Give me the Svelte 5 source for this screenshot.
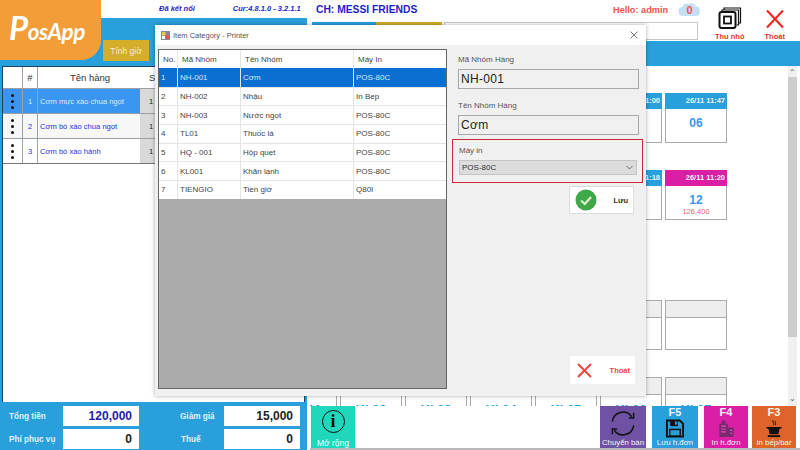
<script>
  const orderRows = [
    { no: 1, name: 'Cơm mực xào chua ngọt', active: true },
    { no: 2, name: 'Cơm bò xào chua ngọt' },
    { no: 3, name: 'Cơm bò xào hành' }
  ];

  const categories = [
    ['NH-001', 'Cơm', 'POS-80C'],
    ['NH-002', 'Nhậu', 'In Bep'],
    ['NH-003', 'Nước ngọt', 'POS-80C'],
    ['TL01', 'Thuốc lá', 'POS-80C'],
    ['HQ - 001', 'Hộp quẹt', 'POS-80C'],
    ['KL001', 'Khăn lạnh', 'POS-80C'],
    ['TIENGIO', 'Tiền giờ', 'Q80I']
  ];

  const emptyCards = (n) => Array.from({ length: n }, () => ({}));

  const row1 = [...emptyCards(6), { time: '26/11 11:00', label: '', amount: '120,000' }, { time: '26/11 11:47', label: '06' }];
  const row2 = [...emptyCards(6), { time: '26/11 11:18', label: '', amount: '' }, { time: '26/11 11:20', label: '12', amount: '126,400', pink: true }];
  const row3 = emptyCards(8).map((c) => ({ ...c, idle: true }));
  const row4 = ['Kl 00', 'Kl 01', 'Kl 02', 'Kl 03', 'Kl 04', 'Kl 05', 'Kl 06', 'Kl 07'].map((top) => ({ idle: true, top }));
</script>

<div class="page">
  <section class="left">
    <div class="status">
      <span>Đã kết nối</span>
      <span class="version">Cur:4.8.1.0 - 3.2.1.1</span>
    </div>
    <div class="left-panel">
      <div class="left-tools"><button class="timer">Tính giờ</button></div>
      <div class="order">
        <div class="order-head">
          <span class="c-handle"></span>
          <span class="c-no">#</span>
          <span class="c-name">Tên hàng</span>
          <span class="c-qty">SL</span>
        </div>
        {#each orderRows as row}
          <div class="order-row" class:active={row.active}>
            <span class="c-handle"><i></i><i></i><i></i></span>
            <span class="c-no">{row.no}</span>
            <span class="c-name">{row.name}</span>
            <span class="c-qty">1</span>
          </div>
        {/each}
      </div>
      <div class="totals">
        <span class="t-label">Tổng tiền</span>
        <span class="t-box strong">120,000</span>
        <span class="t-label t-right">Giảm giá</span>
        <span class="t-box">15,000</span>
        <span class="t-label">Phí phục vụ</span>
        <span class="t-box">0</span>
        <span class="t-label t-right t-tax">Thuế</span>
        <span class="t-box">0</span>
      </div>
    </div>
  </section>

  <section class="right">
    <div class="top">
      <div class="top-main">
        <div class="top-text">
          <span class="store">CH: MESSI FRIENDS</span>
          <span class="hello">Hello: admin</span>
          <svg class="cloud" width="23" height="15" viewBox="0 0 23 15">
            <path d="M5 14C1.500 14 0 11.500 1 9.500C-.5 7 2 4.500 4.500 5C5 2 8.500 .5 11 2C13.500 .5 17 1.500 17.500 4.500C20.500 4 23 7 21.500 9.500C22.500 12 20.500 14 18 14Z" fill="#c5e0f5" />
            <text x="11.500" y="11.500" text-anchor="middle">0</text>
          </svg>
        </div>
        <div class="tabs">
          <span class="tab"></span>
          <span class="tab yellow"></span>
          <span class="search"></span>
        </div>
      </div>
      <div class="action">
        <svg width="24" height="22" viewBox="0 0 24 22">
          <path d="M6 3V1H22.500V16H20.500M4 5V3H20.500V18H18.500" fill="none" stroke="#111" stroke-width="1.200" />
          <rect x="1.500" y="5" width="16" height="16" rx="2" fill="#fff" stroke="#111" stroke-width="2" />
          <rect x="6" y="9.500" width="7" height="7" fill="none" stroke="#111" stroke-width="1.800" />
        </svg>
        <span>Thu nhỏ</span>
      </div>
      <div class="action exit">
        <svg width="20" height="20" viewBox="0 0 20 20">
          <path d="M2 1.500L18 18.500M18 1.500L2 18.500" stroke="#ee2a24" stroke-width="2.200" />
        </svg>
        <span>Thoát</span>
      </div>
    </div>
    <div class="band"></div>

    <div class="floor">
      <div class="cards">
        <div class="card-row">
          {#each row1 as card}
            <div class="card">
              <div class="card-head">{card.time ?? ''}</div>
              <div class="card-body"><b>{card.label ?? ''}</b><small>{card.amount ?? ''}</small></div>
            </div>
          {/each}
        </div>
        <div class="card-row">
          {#each row2 as card}
            <div class="card">
              <div class="card-head" class:pink={card.pink}>{card.time ?? ''}</div>
              <div class="card-body"><b>{card.label ?? ''}</b><small>{card.amount ?? ''}</small></div>
            </div>
          {/each}
        </div>
        <div class="card-row third">
          {#each row3 as card}
            <div class="card">
              <div class="card-head idle"></div>
              <div class="card-body"></div>
            </div>
          {/each}
        </div>
        <div class="card-row">
          {#each row4 as card}
            <div class="card">
              <div class="card-head idle"></div>
              <div class="card-body"><em>{card.top}</em></div>
            </div>
          {/each}
        </div>
      </div>
      <div class="scroll">
        <span class="arrow">⌃</span>
        <div class="thumb"></div>
        <span class="arrow down">⌄</span>
      </div>
    </div>

    <div class="bottom">
      <div class="more">
        <span class="info">i</span>
        <span>Mở rộng</span>
      </div>
      <div class="spacer"></div>
      <div class="fn purple">
        <svg class="swap" width="30" height="30" viewBox="0 0 30 30">
          <path d="M4 13A11 11 0 0 1 24 8M26 17A11 11 0 0 1 6 22" fill="none" stroke="#111" stroke-width="1.500" />
          <path d="M21 9L26 9.500L26 4M9 21L4 20.500L4 26" fill="none" stroke="#111" stroke-width="1.500" />
        </svg>
        <span class="fn-label">Chuyển bàn</span>
      </div>
      <div class="fn blue">
        <span class="key">F5</span>
        <svg width="20" height="20" viewBox="0 0 20 20">
          <path d="M1.500 1.500H15L18.500 5V18.500H1.500Z" fill="none" stroke="#111" stroke-width="2" />
          <rect x="5" y="1.500" width="8" height="6" fill="#111" />
          <rect x="10" y="2.500" width="2" height="3.500" fill="#29a0dc" />
          <rect x="4.500" y="11" width="11" height="7" fill="none" stroke="#111" stroke-width="1.500" />
        </svg>
        <span class="fn-label">Lưu h.đơn</span>
      </div>
      <div class="fn magenta">
        <span class="key">F4</span>
        <svg width="20" height="20" viewBox="0 0 20 20">
          <path d="M3 5H12V19H3ZM12 9H18V19H12ZM5.500 1.500H9.500V5H5.500Z" fill="#7a2a6c" />
          <path d="M5 7.500H10M5 10.500H10M5 13.500H10M14 12H16.500M14 15H16.500" stroke="#e14fb5" stroke-width="1.200" />
        </svg>
        <span class="fn-label">In h.đơn</span>
      </div>
      <div class="fn orange">
        <span class="key">F3</span>
        <svg width="20" height="20" viewBox="0 0 20 20">
          <path d="M9 1C7.500 3 11 4 9.500 6.500M11.500 2C10.500 3.500 12.500 4.500 11.500 6.500" fill="none" stroke="#2b1206" stroke-width="1" />
          <path d="M2 8.500H18V10H16L14.500 16H5.500L4 10H2Z" fill="#111" />
          <rect x="3.500" y="17" width="13" height="2" fill="#111" />
        </svg>
        <span class="fn-label">In bếp/bar</span>
      </div>
    </div>
  </section>

  <div class="logo"><span class="logo-p">P</span>osApp</div>

  <div class="dialog">
    <div class="title">
      <svg width="9" height="9" viewBox="0 0 9 9">
        <rect width="9" height="9" fill="#7d8a9c" />
        <rect x="1" y="1" width="3.500" height="3.500" fill="#f3c544" />
        <rect x="4.500" y="4" width="4" height="4" fill="#e2574c" />
        <rect x="1" y="5" width="3" height="3" fill="#fff" />
      </svg>
      <span>Item Category - Printer</span>
      <svg class="close" width="8" height="8" viewBox="0 0 8 8">
        <path d="M.5.500L7.500 7.500M7.500.500L.5 7.500" stroke="#555" stroke-width=".8" />
      </svg>
    </div>
    <div class="dialog-body">
      <div class="grid">
        <div class="grid-head">
          <span class="g-no">No.</span>
          <span class="g-code">Mã Nhóm</span>
          <span class="g-name">Tên Nhóm</span>
          <span class="g-printer">Máy In</span>
        </div>
        {#each categories as cat, i}
          <div class="grid-row" class:selected={i === 0}>
            <span class="g-no">{i + 1}</span>
            <span class="g-code">{cat[0]}</span>
            <span class="g-name">{cat[1]}</span>
            <span class="g-printer">{cat[2]}</span>
          </div>
        {/each}
      </div>

      <div class="form">
        <div class="field">
          <span class="field-label">Mã Nhóm Hàng</span>
          <div class="field-input">NH-001</div>
        </div>
        <div class="field">
          <span class="field-label">Tên Nhóm Hàng</span>
          <div class="field-input">Cơm</div>
        </div>
        <div class="printer-box">
          <span class="field-label">Máy in</span>
          <div class="select">
            <span>POS-80C</span>
            <svg width="7" height="5" viewBox="0 0 7 5"><path d="M.5 1L3.500 4L6.500 1" fill="none" stroke="#666" /></svg>
          </div>
        </div>
        <div class="dialog-btn save">
          <svg width="22" height="22" viewBox="0 0 22 22">
            <circle cx="11" cy="11" r="10.500" fill="#3fa84b" />
            <path d="M6 11.500L9.800 15L16 8" fill="none" stroke="#dfeecb" stroke-width="2.200" />
          </svg>
          <span>Lưu</span>
        </div>
        <div class="dialog-btn quit">
          <svg width="15" height="15" viewBox="0 0 15 15">
            <path d="M1 1L14 14M14 1L1 14" stroke="#ee4540" stroke-width="2" />
          </svg>
          <span>Thoát</span>
        </div>
      </div>
    </div>
  </div>
</div>

<style>
  :global(body) {
    margin: 0;
    background: #fff;
  }

  .page {
    position: relative;
    display: flex;
    width: 800px;
    height: 450px;
    overflow: hidden;
    background: #fff;
    font-family: "Liberation Sans", Arial, sans-serif;
    font-size: 8px;
    color: #333;
  }

  /* left: order panel */
  .left {
    display: flex;
    flex-direction: column;
    width: 307px;
    margin-right: 3px;
    flex: none;
  }

  .status {
    display: flex;
    gap: 38px;
    height: 18px;
    padding: 4px 0 0 159px;
    box-sizing: border-box;
    color: #1e1ec8;
    font-size: 7.500px;
    font-weight: bold;
    font-style: italic;
  }

  .left-panel {
    display: flex;
    flex-direction: column;
    flex: 1;
    background: #29a0dc;
  }

  .left-tools {
    display: flex;
    height: 48px;
    padding: 22px 0 0 103px;
    box-sizing: border-box;
  }

  .timer {
    width: 46px;
    height: 21px;
    padding: 0;
    border: 0;
    background: #d4ad2a;
    color: #f4eecf;
    font: 8.500px "Liberation Sans", Arial, sans-serif;
  }

  .order {
    flex: 1;
    margin: 0 2px 0 2px;
    border: 1px solid #17466a;
    border-bottom: 0;
    background: #fff;
  }

  .order-head, .order-row {
    display: flex;
    align-items: center;
  }

  .order-head {
    height: 21px;
    font-size: 9.500px;
    color: #333;
  }

  .order-row {
    height: 24px;
    border-top: 1px solid #9aa0a6;
    color: #2f2fd8;
    font-size: 7.600px;
    background: #f7f7f7;
  }

  .order-row:nth-child(4) {
    background: #fff;
  }

  .order-row:last-child {
    border-bottom: 1px solid #777;
  }

  .order-row.active {
    background: #3a96f0;
    color: #dcecfb;
  }

  .c-handle {
    display: flex;
    flex-direction: column;
    align-items: center;
    justify-content: center;
    gap: 3px;
    width: 19px;
    height: 100%;
  }

  .c-handle i {
    width: 3px;
    height: 3px;
    border-radius: 50%;
    background: #111;
  }

  .c-no {
    display: flex;
    align-items: center;
    justify-content: center;
    width: 15px;
    height: 100%;
    border-left: 1px solid #9aa0a6;
    box-sizing: border-box;
  }

  .c-name {
    display: flex;
    align-items: center;
    width: 103px;
    height: 100%;
    padding-left: 2px;
    border-left: 1px solid #9aa0a6;
    box-sizing: border-box;
    white-space: nowrap;
  }

  .order-head .c-name {
    justify-content: center;
  }

  .c-qty {
    display: flex;
    align-items: center;
    width: 40px;
    height: 100%;
    padding-left: 9px;
    box-sizing: border-box;
  }

  .order-row .c-qty {
    background: #d9d9d9;
    color: #222;
  }

  .totals {
    display: grid;
    grid-template-columns: 63px 76px 85px 76px;
    grid-template-rows: 20px 20px;
    row-gap: 3px;
    height: 48px;
    padding: 4px 0 0 0;
    box-sizing: border-box;
    align-items: center;
  }

  .t-label {
    padding-left: 9px;
    color: #e3f2fb;
    font-size: 8.200px;
    font-weight: bold;
  }

  .t-right {
    padding-left: 41px;
  }

  .t-tax {
    padding-left: 42px;
  }

  .t-box {
    height: 100%;
    padding-right: 7px;
    background: #fff;
    color: #222;
    font-size: 12px;
    font-weight: bold;
    line-height: 20px;
    text-align: right;
  }

  .strong {
    color: #1e1ea8;
  }

  /* right: floor plan */
  .right {
    display: flex;
    flex-direction: column;
    flex: 1;
    min-width: 0;
  }

  .top {
    display: flex;
    height: 41px;
  }

  .top-main {
    width: 400px;
    flex: none;
  }

  .top-text {
    display: flex;
    align-items: center;
    height: 22px;
    padding-bottom: 3px;
    box-sizing: border-box;
  }

  .store {
    width: 303px;
    padding-left: 6px;
    box-sizing: border-box;
    color: #1e1ec8;
    font-size: 10.300px;
    font-weight: bold;
  }

  .hello {
    width: 65px;
    color: #f0524c;
    font-size: 9.200px;
    font-weight: bold;
  }

  .cloud {
    flex: none;
  }

  .cloud text {
    fill: #ef5350;
    font-size: 11px;
    font-weight: bold;
  }

  .tabs {
    display: flex;
    height: 19px;
    padding-left: 2px;
  }

  .tab {
    width: 64px;
    background: #29a0dc;
  }

  .tab.yellow {
    width: 66px;
    background: #d4ad2a;
  }

  .search {
    width: 254px;
    height: 18px;
    margin-left: 2px;
    border: 1px solid #c8c8c8;
    box-sizing: border-box;
  }

  .action {
    display: flex;
    flex-direction: column;
    align-items: center;
    gap: 3px;
    width: 42px;
    padding-top: 7px;
    box-sizing: border-box;
    color: #e0352f;
    font-size: 7.500px;
    font-weight: bold;
    white-space: nowrap;
  }

  .action.exit {
    width: 54px;
    padding: 9px 0 0 0;
    gap: 3px;
  }

  .band {
    height: 25px;
    background: #29a0dc;
  }

  .floor {
    display: flex;
    flex: 1;
    min-height: 0;
  }

  .cards {
    display: flex;
    flex-direction: column;
    flex: 1;
    align-items: flex-end;
    gap: 27px;
    padding: 27px 61px 0 0;
    min-width: 0;
    overflow: hidden;
  }

  .card-row {
    display: flex;
    gap: 3px;
    flex: none;
  }

  .third {
    margin-top: 53px;
  }

  .card {
    display: flex;
    flex-direction: column;
    width: 62px;
    height: 50px;
    border: 1px solid #aaa;
    box-sizing: border-box;
    flex: none;
  }

  .card-head {
    height: 16px;
    margin: -1px -1px 0;
    background: #29a0dc;
    color: #e8f5fc;
    font-size: 7.500px;
    font-weight: bold;
    line-height: 16px;
    text-align: right;
    padding-right: 2px;
  }

  .card-head.pink {
    background: #d91fa6;
  }

  .card-head.idle {
    margin: 0;
    background: #eee;
    border-bottom: 1px solid #aaa;
  }

  .card-body {
    display: flex;
    flex-direction: column;
    align-items: center;
    flex: 1;
    padding: 7px 0 0 0;
    box-sizing: border-box;
  }

  .card-body b {
    color: #3a96f0;
    font-size: 12px;
    line-height: 14px;
  }

  .card-body small {
    color: #f0606a;
    font-size: 7.500px;
    line-height: 9px;
  }

  .card-body em {
    color: #29a0dc;
    font-size: 13px;
    font-style: normal;
    font-weight: bold;
  }

  .scroll {
    display: flex;
    flex-direction: column;
    width: 9px;
    margin-right: 3px;
    flex: none;
    background: #f0f0f0;
    color: #555;
    font-size: 8px;
    line-height: 8px;
    text-align: center;
  }

  .arrow {
    height: 11px;
    padding-top: 3px;
    box-sizing: border-box;
  }

  .arrow.down {
    margin-top: auto;
    padding-top: 0;
  }

  .thumb {
    height: 260px;
    background: #cdcdcd;
  }

  .bottom {
    display: flex;
    height: 44px;
    border-bottom: 2px solid #b8b8b8;
    box-sizing: border-box;
    padding-left: 1px;
    background: #fff;
  }

  .more {
    display: flex;
    flex-direction: column;
    align-items: center;
    justify-content: space-between;
    width: 44px;
    padding-top: 4px;
    box-sizing: border-box;
    background: #1fd8bc;
    color: #f2fffb;
    font-size: 8.500px;
  }

  .info {
    width: 23px;
    height: 23px;
    border: 1.500px solid #111;
    border-radius: 50%;
    box-sizing: border-box;
    color: #111;
    font-family: "Liberation Serif", serif;
    font-size: 18px;
    font-weight: bold;
    line-height: 20px;
    text-align: center;
  }

  .spacer {
    width: 245px;
  }

  .fn {
    display: flex;
    flex-direction: column;
    align-items: center;
    width: 46px;
    margin-right: 6px;
    color: #f4f4f4;
  }

  .key {
    height: 13px;
    font-size: 11px;
    line-height: 13px;
    font-weight: bold;
  }

  .fn-label {
    margin-top: auto;
    font-size: 7.800px;
    line-height: 10px;
    white-space: nowrap;
  }

  .swap {
    margin-top: 3px;
  }

  .purple {
    background: #6f52a3;
  }

  .blue {
    background: #29a0dc;
  }

  .magenta {
    width: 44px;
    margin-right: 4px;
    background: #d91fa6;
  }

  .orange {
    width: 44px;
    margin-right: 0;
    background: #e0642a;
  }

  /* logo sits over the corner of the window */
  .logo {
    position: absolute;
    left: 0;
    top: 0;
    width: 101px;
    height: 60px;
    padding: 7px 0 0 9px;
    box-sizing: border-box;
    border-radius: 0 0 20px 0;
    background: #f29d38;
    color: #fff;
    font-family: Lato, sans-serif;
    font-size: 22.500px;
    font-style: italic;
    font-weight: bold;
    letter-spacing: -.5px;
    white-space: nowrap;
  }

  .logo-p {
    font-size: 33px;
  }

  /* dialog window */
  .dialog {
    position: absolute;
    left: 155px;
    top: 25px;
    display: flex;
    flex-direction: column;
    width: 491px;
    height: 371px;
    background: #f0f0f0;
    box-shadow: 0 0 4px rgba(0, 0, 0, .35);
    font-family: "Liberation Sans", Arial, sans-serif;
  }

  .title {
    display: flex;
    align-items: center;
    gap: 3px;
    height: 20px;
    padding: 0 8px 0 6px;
    background: #fff;
    color: #555;
    font-size: 7.500px;
    flex: none;
  }

  .close {
    margin-left: auto;
  }

  .dialog-body {
    display: flex;
    flex: 1;
    min-height: 0;
    padding: 4px 0 7px 3px;
  }

  .grid {
    width: 289px;
    flex: none;
    border: 1px solid #666;
    box-sizing: border-box;
    background: #ababab;
  }

  .grid-head, .grid-row {
    display: flex;
    align-items: center;
    background: #fff;
    font-size: 8px;
    color: #444;
  }

  .grid-head {
    height: 18px;
  }

  .grid-row {
    height: 18.700px;
    border-top: 1px solid #e4e4e4;
    box-sizing: border-box;
  }

  .grid-row.selected {
    background: #0a6fd0;
    color: #d6e8fa;
    border-top: 0;
  }

  .grid-head span, .grid-row span {
    display: flex;
    align-items: center;
    height: 100%;
    padding-left: 2px;
    border-left: 1px solid #e4e4e4;
    box-sizing: border-box;
  }

  .grid-head span {
    padding-left: 4px;
  }

  .g-no {
    width: 18px;
    border-left: 0 !important;
  }

  .g-code {
    width: 63px;
  }

  .g-name {
    width: 113px;
  }

  .g-printer {
    width: 93px;
  }

  .form {
    display: flex;
    flex-direction: column;
    flex: 1;
    padding: 5px 3px 0 5px;
  }

  .field {
    padding: 0 4px 0 6px;
    margin-bottom: 11px;
  }

  .field-label {
    display: block;
    height: 12px;
    margin-bottom: 3px;
    color: #555;
    font-size: 8px;
    line-height: 12px;
  }

  .field-input {
    height: 20px;
    padding-left: 2px;
    border: 1px solid #a8a8a8;
    box-sizing: border-box;
    color: #222;
    font-size: 12px;
    line-height: 18px;
    letter-spacing: .3px;
  }

  .printer-box {
    height: 44px;
    padding: 5px 5px 0 6px;
    margin-top: -7px;
    border: 1px solid #c92a3a;
    box-sizing: border-box;
  }

  .select {
    display: flex;
    align-items: center;
    justify-content: space-between;
    height: 15px;
    padding: 0 3px 0 2px;
    border: 1px solid #c4c4c4;
    box-sizing: border-box;
    background: #dcdcdc;
    color: #333;
    font-size: 8px;
  }

  .dialog-btn {
    display: flex;
    align-items: center;
    justify-content: space-between;
    width: 65px;
    height: 28px;
    padding: 0 5px;
    box-sizing: border-box;
    align-self: flex-end;
    background: #fff;
    font-size: 7.500px;
    font-weight: bold;
  }

  .save {
    margin: 3px 9px 0 0;
    border: 1px solid #ddd;
    color: #333;
  }

  .quit {
    margin: auto 8px 5px 0;
    padding-left: 7px;
    color: #ee4540;
  }
</style>
